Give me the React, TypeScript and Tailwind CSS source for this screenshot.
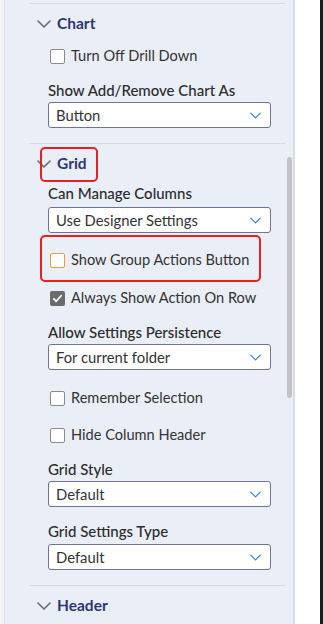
import { ReactNode } from 'react';

const font = { fontFamily: 'Lato, "Noto Sans", sans-serif' };

const Chevron = ({ className }: { className: string }) => (
  <svg viewBox="0 0 14 8" className={className} fill="none" stroke="currentColor" strokeWidth="1.6" strokeLinecap="round" strokeLinejoin="round">
    <path d="M1 1l6 6 6-6" />
  </svg>
);

const Separator = ({ className = '' }: { className?: string }) => (
  <div className={`ml-[24px] w-[257px] h-px bg-[#d6dae3] ${className}`} />
);

const SectionHeader = ({ title, h }: { title: string; h: string }) => (
  <div className={`flex items-center pl-[32px] ${h}`}>
    <Chevron className="w-[14px] h-[8px] text-[#6b6b6b]" />
    <span className="ml-[6px] text-[15.5px] font-bold text-[#2c3775]">{title}</span>
  </div>
);

const Checkbox = ({ label, state = 'off', className = '' }: { label: string; state?: 'off' | 'on' | 'focus'; className?: string }) => (
  <div className={`flex items-center h-[24px] pl-[45px] ${className}`}>
    {state === 'on' ? (
      <div className="w-[15px] h-[15px] rounded-[2px] bg-[#6b6b6b] flex items-center justify-center">
        <svg viewBox="0 0 12 12" className="w-[11px] h-[11px]" fill="none" stroke="white" strokeWidth="2" strokeLinecap="round" strokeLinejoin="round">
          <path d="M2 6.5l2.5 2.5L10 3" />
        </svg>
      </div>
    ) : (
      <div
        className={`w-[15px] h-[15px] rounded-[2px] bg-white border ${
          state === 'focus' ? 'border-[#f39a3c]' : 'border-[#8a8a8a]'
        }`}
      />
    )}
    <span className="ml-[6px] text-[14.6px] text-[#333]">{label}</span>
  </div>
);

const Label = ({ children, className = '' }: { children: ReactNode; className?: string }) => (
  <div className={`h-[20px] flex items-center pl-[43px] text-[15px] font-medium text-[#2b2b2b] ${className}`}>{children}</div>
);

const Select = ({ value, className = '' }: { value: string; className?: string }) => (
  <div className={`ml-[43px] w-[223px] h-[26px] bg-white border border-[#6e7499] rounded-[3px] flex items-center justify-between pl-[7px] pr-[9px] ${className}`}>
    <span className="text-[14.8px] text-[#333]">{value}</span>
    <Chevron className="w-[11px] h-[7px] text-[#3d82c8]" />
  </div>
);

export default function App() {
  return (
    <div className="w-[323px] h-[624px] flex overflow-hidden bg-white" style={font}>
      <div className="w-[5px] bg-[#f4f4f4] border-r border-[#e2e2e2]" />
      <div className="w-[282px] bg-[#eaeef7] relative">
        <div className="h-[3px]" />
        <Separator />
        <SectionHeader title="Chart" h="h-[40px]" />
        <Checkbox label="Turn Off Drill Down" />
        <Label className="mt-[12px]">Show Add/Remove Chart As</Label>
        <Select value="Button" className="mt-[2px]" />
        <Separator className="mt-[15px]" />

        <div className="relative">
          <SectionHeader title="Grid" h="h-[39px]" />
          <div className="absolute left-[35px] top-[3px] w-[58px] h-[35px] border-2 border-[#e8201f] rounded-[5px]" />
        </div>
        <Label>Can Manage Columns</Label>
        <Select value="Use Designer Settings" className="mt-[4px]" />
        <div className="relative mt-[15px]">
          <div className="absolute left-[35px] top-[-13px] w-[221px] h-[47px] border-2 border-[#e8201f] rounded-[5px]" />
          <Checkbox label="Show Group Actions Button" state="focus" />
        </div>
        <Checkbox label="Always Show Action On Row" state="on" className="mt-[14px]" />
        <Label className="mt-[12px]">Allow Settings Persistence</Label>
        <Select value="For current folder" className="mt-[2px]" />
        <Checkbox label="Remember Selection" className="mt-[16px]" />
        <Checkbox label="Hide Column Header" className="mt-[13px]" />
        <Label className="mt-[12px]">Grid Style</Label>
        <Select value="Default" className="mt-[2px]" />
        <Label className="mt-[14px]">Grid Settings Type</Label>
        <Select value="Default" className="mt-[3px]" />
        <Separator className="mt-[15px]" />
        <SectionHeader title="Header" h="h-[40px]" />
      </div>
      <div className="w-[6px] bg-[#eaeef7]">
        <div className="mt-[157px] w-[5px] h-[241px] rounded-full bg-[#c3c4c8]" />
      </div>
      <div className="w-[2px] bg-[#dcdde1]" />
      <div className="w-[25px] bg-white" />
      <div className="w-[3px] bg-[#1c1c1c]" />
    </div>
  );
}
